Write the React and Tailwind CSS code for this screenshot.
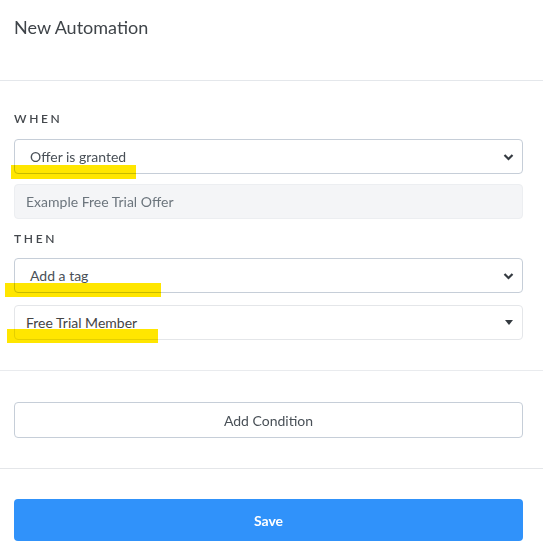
import { Fragment } from 'react'

function Chevron() {
  return (
    <svg width="11" height="8" viewBox="0 0 11 8" className="text-[#343a40]">
      <path d="M1.5 2 L5.5 6 L9.5 2" fill="none" stroke="currentColor" strokeWidth="2.2" />
    </svg>
  )
}

function Highlight({ className }) {
  return <div className={`absolute h-[14px] bg-[#ffe600] mix-blend-multiply pointer-events-none ${className}`} />
}

function SelectBox({ label, children }) {
  return (
    <div className="relative h-[35px] rounded-[4px] border border-[#c6ced8] bg-white flex items-center pl-[15px] pr-[8px]">
      <span className="flex-1 text-[14px] text-[#495057]">{label}</span>
      <Chevron />
      {children}
    </div>
  )
}

export default function App() {
  return (
    <div className="w-[543px] h-[553px] bg-white font-['Lato',sans-serif] overflow-hidden">
      <div className="h-[81px] border-b border-[#e4e7eb] pl-[14px] pr-[20px] pt-[15px]">
        <h1 className="text-[18px] leading-[24px] text-[#3f4449]">New Automation</h1>
      </div>

      <div className="pl-[14px] pr-[20px] pt-[30px] pb-[30px] border-b border-[#e9ebee]">
        <div className="text-[12px] leading-[16px] tracking-[0.22em] font-semibold text-[#44484d]">WHEN</div>
        <div className="mt-[12px]">
          <SelectBox label="Offer is granted">
            <Highlight className="left-[-4px] top-[25px] w-[125px]" />
          </SelectBox>
        </div>
        <div className="mt-[10px] h-[35px] rounded-[4px] border border-[#eceef1] bg-[#f4f5f7] flex items-center px-[11px] text-[14px] text-[#6c757d]">
          Example Free Trial Offer
        </div>

        <div className="mt-[12px] text-[12px] leading-[16px] tracking-[0.22em] font-semibold text-[#44484d]">THEN</div>
        <div className="mt-[11px]">
          <SelectBox label="Add a tag">
            <Highlight className="left-[-10px] top-[24px] w-[156px]" />
          </SelectBox>
        </div>
        <div className="relative mt-[12px] h-[35px] rounded-[4px] border border-[#e4e6e9] bg-white flex items-center pl-[11px] pr-[9px]">
          <span className="flex-1 text-[14px] text-[#444]">Free Trial Member</span>
          <span className="w-0 h-0 border-l-[4px] border-r-[4px] border-t-[5px] border-l-transparent border-r-transparent border-t-[#343a40]" />
          <Highlight className="left-[-8px] top-[23px] w-[151px]" />
        </div>
      </div>

      <div className="pl-[14px] pr-[20px] pt-[31px] pb-[30px] border-b border-[#e4e6e9]">
        <button className="w-full h-[36px] rounded-[4px] border border-[#c6ced8] bg-white text-[14px] text-[#495057]">
          Add Condition
        </button>
      </div>

      <div className="pl-[14px] pr-[20px] pt-[30px]">
        <button className="w-full h-[42px] rounded-[4px] bg-[#3092fa] text-[14px] font-bold text-white">
          Save
        </button>
      </div>
    </div>
  )
}
